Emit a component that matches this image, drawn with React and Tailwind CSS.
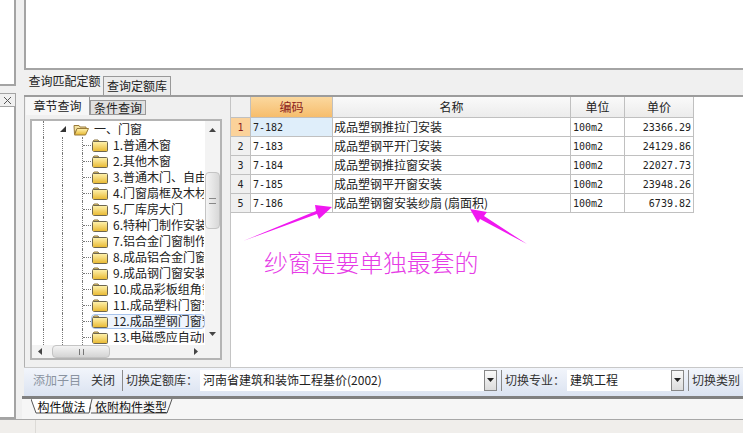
import React from 'react';

const cjk = "font-['Noto_Sans_CJK_SC',sans-serif]";
const mono = "font-['DejaVu_Sans_Mono','Noto_Sans_CJK_SC',monospace] text-[10px]";

const treeItems = [
    '1.普通木窗', '2.其他木窗', '3.普通木门、自由门', '4.门窗扇框及木材', '5.厂库房大门',
    '6.特种门制作安装', '7.铝合金门窗制作', '8.成品铝合金门窗', '9.成品钢门窗安装',
    '10.成品彩板组角钢', '11.成品塑料门窗安', '12.成品塑钢门窗安', '13.电磁感应自动门',
];

const rows = [
    ['7-182', '成品塑钢推拉门安装', '100m2', '23366.29'],
    ['7-183', '成品塑钢平开门安装', '100m2', '24129.86'],
    ['7-184', '成品塑钢推拉窗安装', '100m2', '22027.73'],
    ['7-185', '成品塑钢平开窗安装', '100m2', '23948.26'],
    ['7-186', <>成品塑钢窗安装纱扇<span className="pl-[2px]">(扇面积)</span></>, '100m2', '6739.82'],
];

const Folder = ({ open }) => (
    <svg width="16" height="13" viewBox="0 0 16 13" className="shrink-0">
        <defs>
            <linearGradient id="fold" x1="0" y1="0" x2="0" y2="1">
                <stop offset="0" stopColor="#fff3b0" />
                <stop offset="1" stopColor="#e8b830" />
            </linearGradient>
        </defs>
        {open ? (
            <>
                <path d="M1 2.5h5l1 1.5h6v2H4L1.5 11z" fill="#f4e2a0" stroke="#9a7b3a" />
                <path d="M1.5 12L4 5.5h11.5L12.5 12z" fill="url(#fold)" stroke="#9a7b3a" />
            </>
        ) : (
            <>
                <path d="M1 2.5l1-1.5h4l1 1.5z" fill="#f0d880" stroke="#8a7440" />
                <rect x="0.5" y="2.5" width="15" height="10" rx="1" fill="url(#fold)" stroke="#6d6650" />
            </>
        )}
    </svg>
);

const Arrow = ({ dir }) => {
    const shapes = {
        up: 'M0 4L3.5 0L7 4z',
        down: 'M0 0L3.5 4L7 0z',
        left: 'M4 0L0 3.5L4 7z',
        right: 'M0 0L4 3.5L0 7z',
    };
    return (
        <svg width="7" height="7" viewBox="0 0 7 7" className="shrink-0">
            <path d={shapes[dir]} fill="#444" />
        </svg>
    );
};

const Guide = ({ w }) => <div className={`${w} h-full shrink-0 border-l border-dotted border-[#777]`} />;

const TreeRow = ({ label, selected }) => (
    <div className="flex h-4 items-center">
        <div className="w-[11px] shrink-0" />
        <Guide w="w-[19px]" />
        <Guide w="w-[20px]" />
        <div className="flex h-full w-[9px] shrink-0 items-center border-l border-dotted border-[#777]">
            <div className="w-full border-t border-dotted border-[#777]" />
        </div>
        <div className={`flex h-[15px] flex-1 items-center gap-[5px] overflow-hidden whitespace-nowrap rounded-sm border ${selected ? 'border-[#a8c4ec] bg-[#eef4fd]' : 'border-transparent'}`}>
            <Folder />
            <span className="text-[12px] leading-none text-[#222]">{label}</span>
        </div>
    </div>
);

const Tree = () => (
    <div className={`ml-[5px] mt-[4px] flex h-[241px] w-[192px] flex-col border-2 border-[#b4b4b4] bg-white ${cjk}`}>
        <div className="flex h-[224px]">
            <div className="w-[173px] overflow-hidden">
                <div className="flex h-4 items-center">
                    <div className="w-[11px] shrink-0" />
                    <div className="h-full w-[17px] shrink-0 border-l border-dotted border-[#777]" />
                    <svg width="7" height="7" viewBox="0 0 7 7" className="mr-[6px] shrink-0"><path d="M6 0v6H0z" fill="#333" /></svg>
                    <Folder open />
                    <span className="ml-[5px] whitespace-nowrap text-[12px] leading-none text-[#222]">一、门窗</span>
                </div>
                {treeItems.map((t) => (
                    <TreeRow key={t} label={t} selected={t.startsWith('12.')} />
                ))}
            </div>
            <div className="flex w-[15px] flex-col items-center bg-[#f3f3f3] pt-[7px]">
                <Arrow dir="up" />
                <div className="mt-[37px] flex h-[57px] w-full items-center justify-center rounded-sm border border-[#c4c4c4] bg-gradient-to-r from-[#f4f4f4] to-[#d8d8d8]">
                    <div className="h-[6px] w-[7px] border-y border-[#888]" />
                </div>
                <div className="mt-[103px]"><Arrow dir="down" /></div>
            </div>
        </div>
        <div className="flex h-[13px] items-center bg-[#f3f3f3] pl-[6px]">
            <Arrow dir="left" />
            <div className="ml-[7px] flex h-[13px] w-[58px] items-center justify-center rounded-sm border border-[#c4c4c4] bg-gradient-to-b from-[#f4f4f4] to-[#d4d4d4]">
                <div className="h-[6px] w-[5px] border-x border-[#777]" />
            </div>
            <div className="ml-[84px]"><Arrow dir="right" /></div>
        </div>
    </div>
);

const cell = 'flex h-[19px] items-center border-b border-r border-[#c0c0c0] overflow-hidden whitespace-nowrap';

const Grid = () => (
    <div className={`relative flex-1 border-l border-[#c4c4c4] bg-white ${cjk}`}>
        <div className="flex h-[21px] text-[12px] text-[#222]">
            <div className="w-[20px] border-b border-r border-[#c0c0c0] bg-[#f0f0f0]" />
            <div className="flex w-[82px] items-center justify-center border-b border-r border-[#c0c0c0] bg-gradient-to-b from-[#fbd89e] to-[#f6bd6c] text-[#8a1c1c]">编码</div>
            <div className="flex w-[238px] items-center justify-center border-b border-r border-[#c0c0c0] bg-gradient-to-b from-[#fafafa] to-[#ececec]">名称</div>
            <div className="flex w-[54px] items-center justify-center border-b border-r border-[#c0c0c0] bg-gradient-to-b from-[#fafafa] to-[#ececec]">单位</div>
            <div className="flex w-[69px] items-center justify-center border-b border-r border-[#c0c0c0] bg-gradient-to-b from-[#fafafa] to-[#ececec]">单价</div>
        </div>
        {rows.map((r, i) => (
            <div key={r[0]} className="flex text-[#222]">
                <div className={`${cell} w-[20px] justify-center ${mono} ${i === 0 ? 'bg-[#fbd29a] text-[#8a1c1c]' : 'bg-[#f0f0f0]'}`}>{i + 1}</div>
                <div className={`${cell} w-[82px] pl-[2px] ${mono} ${i === 0 ? 'bg-[#dfeefa]' : ''}`}>{r[0]}</div>
                <div className={`${cell} w-[238px] pl-[1px] text-[12px]`}>{r[1]}</div>
                <div className={`${cell} w-[54px] pl-[2px] ${mono}`}>{r[2]}</div>
                <div className={`${cell} w-[69px] justify-end pr-[2px] ${mono}`}>{r[3]}</div>
            </div>
        ))}
        <div className="ml-[33px] mt-[37px] text-[24px] leading-[24px] tracking-[-0.2px] text-[#e63ce6] font-light">纱窗是要单独最套的</div>
        <svg width="310" height="50" viewBox="0 0 310 50" className="pointer-events-none absolute left-[9px] top-[106px]">
            <path d="M3 38L76 8L75 2L92 4L79 16L77 11z" fill="#f018f0" />
            <path d="M230 6L247 9L244 13L287 41L240 16L238 20z" fill="#f018f0" />
        </svg>
    </div>
);

const Combo = ({ w, text }) => (
    <div className={`flex h-[21px] ${w} items-center`}>
        <div className="flex h-full flex-1 items-center bg-white pl-[3px] text-[12px] text-[#222]">{text}</div>
        <div className="flex h-[21px] w-[13px] items-center justify-center border border-[#888] bg-gradient-to-b from-[#fafafa] to-[#dcdcdc]">
            <svg width="7" height="4" viewBox="0 0 7 4"><path d="M0 0h7L3.5 4z" fill="#222" /></svg>
        </div>
    </div>
);

const Sep = () => <div className="h-[21px] w-px bg-[#8a8a8a]" />;

export default function App() {
    return (
        <div className={`flex h-[433px] w-[743px] flex-col overflow-hidden bg-[#f0f0f0] ${cjk}`}>
            <div className="flex h-[420px] border-b border-[#a8a8a8]">
                {/* left strip */}
                <div className="flex w-[16px] flex-col">
                    <div className="h-[86px] border-b-2 border-r-2 border-[#a4a4a4] bg-white" />
                    <div className="mt-[7px] flex h-[14px] items-center justify-center border border-l-0 border-[#a4a4a4] text-[#555]">
                        <svg width="9" height="9" viewBox="0 0 9 9"><path d="M1 1l7 7M8 1l-7 7" stroke="#555" fill="none" /></svg>
                    </div>
                    <div className="flex-1 border-b-2 border-r-2 border-[#a4a4a4] bg-white" />
                </div>
                {/* main */}
                <div className="ml-[8px] flex min-w-0 flex-1 flex-col">
                    <div className="h-[70px] border-b-2 border-l-2 border-[#a4a4a4] bg-white" />
                    <div className="flex h-[25px] items-end text-[12px] text-[#222]">
                        <div className="flex h-[24px] w-[79px] items-center justify-center pb-[4px] pl-[2px]">查询匹配定额</div>
                        <div className="-mb-px flex h-[20px] w-[68px] items-center justify-center border border-[#999] bg-[#ececec]">查询定额库</div>
                    </div>
                    <div className="flex h-[272px] border-t-2 border-[#9c9c9c]">
                        <div className="w-[206px] border-l border-[#b0b0b0]">
                            <div className="flex h-[18px] items-end pl-[1px] text-[12px] text-[#222]">
                                <div className="flex h-[18px] w-[64px] items-center justify-center border-r border-[#999] bg-[#f7f7f7]">章节查询</div>
                                <div className="flex h-[15px] w-[56px] items-center justify-center border border-[#999] bg-[#e0e0e0]">条件查询</div>
                            </div>
                            <Tree />
                        </div>
                        <Grid />
                    </div>
                    {/* toolbar */}
                    <div className="flex h-[29px] items-center border-t border-[#c8c8c8] bg-gradient-to-b from-[#f2f5fb] to-[#dbe3f1] pb-[4px] pl-[9px] text-[12px] text-[#333]">
                        <span className="text-[#8a93a0]">添加子目</span>
                        <span className="ml-[10px]">关闭</span>
                        <div className="ml-[7px] mr-[3px]"><Sep /></div>
                        <span className="w-[74px]">切换定额库：</span>
                        <Combo w="w-[297px]" text="河南省建筑和装饰工程基价(2002)" />
                        <div className="ml-[4px] mr-[3px]"><Sep /></div>
                        <span className="w-[62px]">切换专业：</span>
                        <Combo w="w-[117px]" text="建筑工程" />
                        <div className="ml-[4px] mr-[3px]"><Sep /></div>
                        <span className="whitespace-nowrap">切换类别</span>
                    </div>
                    {/* bottom tabs */}
                    <div className="h-[3px] -ml-[2px] bg-[#808080]" />
                    <div className="-ml-[2px] flex flex-1 bg-[#f6f6f6] bg-[radial-gradient(#e2e2e2_0.5px,transparent_0.5px)] bg-[length:2px_2px] pl-[9px] text-[12px] text-[#111]">
                        <div className="relative flex h-[15px] w-[58px] items-center justify-center">
                            <svg width="60" height="15" viewBox="0 0 60 15" className="absolute left-0 top-0">
                                <path d="M0 0l5 14h53l4-14" fill="#fff" stroke="#555" />
                            </svg>
                            <span className="relative pl-[3px]">构件做法</span>
                        </div>
                        <div className="relative flex h-[15px] w-[84px] items-center justify-center">
                            <svg width="84" height="15" viewBox="0 0 84 15" className="absolute left-0 top-0">
                                <path d="M2 14h76l5-14" fill="none" stroke="#555" />
                                <path d="M0 12l3-12" fill="none" stroke="#555" />
                            </svg>
                            <span className="relative">依附构件类型</span>
                        </div>
                    </div>
                </div>
            </div>
            {/* status bar */}
            <div className="flex flex-1 bg-[#f0eeeb]">
                <div className="w-[36px] border-r border-[#dcdad6]" />
            </div>
        </div>
    );
}
